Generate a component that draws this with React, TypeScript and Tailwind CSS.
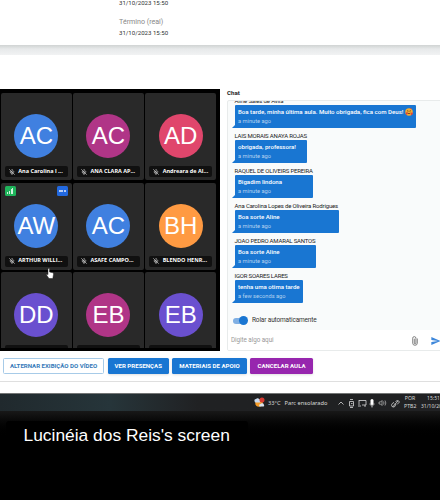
import React from 'react';
import { MicOff } from 'lucide-react';

const people = [
  { initials: 'AC', name: 'Ana Carolina l ...', color: 'bg-[#4080e0]' },
  { initials: 'AC', name: 'ANA CLARA AP...', color: 'bg-[#b03587]' },
  { initials: 'AD', name: 'Andreara de Al...', color: 'bg-[#e0466c]' },
  { initials: 'AW', name: 'ARTHUR WILLI...', color: 'bg-[#4080e0]', active: true },
  { initials: 'AC', name: 'ASAFE CAMPO...', color: 'bg-[#4080e0]' },
  { initials: 'BH', name: 'BLENDO HENR...', color: 'bg-[#ff9a42]' },
  { initials: 'DD', name: 'Diogo da Silva', color: 'bg-[#6a50cf]' },
  { initials: 'EB', name: 'EDER BARBOSA', color: 'bg-[#b03587]' },
  { initials: 'EB', name: 'Eliza Barros', color: 'bg-[#6a50cf]' },
];

const messages = [
  { name: 'Aline Sales de Avila', text: 'Boa tarde, minha última aula. Muito obrigada, fica com Deus!', ago: 'a minute ago', width: 'w-[181.500px]', nameGap: 'tracking-[-0.15px]', emoji: true },
  { name: 'LAIS MORAIS ANAYA ROJAS', text: 'obrigada, professora!', ago: 'a minute ago', width: 'w-[72.500px]', nameGap: 'tracking-[-0.19px]' },
  { name: 'RAQUEL DE OLIVEIRS PEREIRA', text: 'Bigadim lindona', ago: 'a minute ago', width: 'w-[78.500px]', nameGap: 'tracking-[-0.17px]' },
  { name: 'Ana Carolina Lopes de Oliveira Rodrigues', text: 'Boa sorte Aline', ago: 'a minute ago', width: 'w-[104px]', nameGap: 'tracking-[-0.15px]' },
  { name: 'JOAO PEDRO AMARAL SANTOS', text: 'Boa sorte Aline', ago: 'a minute ago', width: 'w-[81.500px]', nameGap: 'tracking-[-0.2px]' },
  { name: 'IGOR SOARES LARES', text: 'tenha uma otima tarde', ago: 'a few seconds ago', width: 'w-[68.500px]', nameGap: 'tracking-[-0.2px]' },
];

function Tile({ p }: { p: (typeof people)[number] }) {
  return (
    <div className="relative flex h-[87px] flex-col items-center rounded-[2px] bg-[#292929] pt-[21px]">
      {p.active && (
        <>
          <div className="absolute left-1 top-[3px] flex size-[10.5px] items-end justify-center gap-[0.6px] rounded-[1.5px] bg-[#1fb45b] pb-[2px]">
            <i className="h-[2px] w-[1px] bg-white/80" />
            <i className="h-[3.5px] w-[1px] bg-white/80" />
            <i className="h-[5px] w-[1px] bg-white/80" />
            <i className="h-[6.5px] w-[1px] bg-white/80" />
          </div>
          <div className="absolute right-1 top-[3px] flex size-[10.5px] items-center justify-center gap-[0.6px] rounded-[1.5px] bg-[#2269e0]">
            <i className="size-[2px] rounded-full bg-white/90" />
            <i className="size-[2px] rounded-full bg-white/90" />
            <i className="size-[2px] rounded-full bg-white/90" />
          </div>
          <svg className="absolute left-[45px] top-[85px] z-10 h-[11px] w-[8px]" viewBox="0 0 8 11">
            <path d="M2 .7q1-.9 1.500.3V4l3.300.8q.9.400.7 1.500L6.800 10.500H3L.4 6.800q.2-1.200 1.600-.2z" fill="#fff" stroke="#222" strokeWidth=".5" />
          </svg>
        </>
      )}
      <div className={`flex size-11 shrink-0 items-center justify-center rounded-full text-[24px] leading-none text-white ${p.color}`}>
        {p.initials}
      </div>
      <div className="mt-[8px] flex h-[11px] w-[63px] items-center rounded-[2px] bg-[#101010] pl-[4px] text-white">
        <MicOff className="size-[6px] shrink-0" strokeWidth={2} />
        <span className="ml-[3.5px] whitespace-nowrap font-['Open_Sans',sans-serif] text-[5.5px] font-bold leading-none">{p.name}</span>
      </div>
    </div>
  );
}

function Btn({ children, className }: { children: React.ReactNode; className: string }) {
  return (
    <button className={`flex h-4 items-center justify-center whitespace-nowrap rounded-[1.5px] text-[6.1px] font-bold leading-none ${className}`}>
      {children}
    </button>
  );
}

function Message({ m }: { m: (typeof messages)[number] }) {
  return (
    <div className="h-[35px]">
      <div className={`h-2 whitespace-nowrap text-[6px] leading-[9px] text-[#222] ${m.nameGap}`}>{m.name}</div>
      <div className={`relative mt-[1px] h-[23px] rounded-[1px] bg-[#1976d2] pl-[3.5px] pt-[3px] ${m.width}`}>
        <svg className="absolute -left-[3px] bottom-0 h-[4px] w-[4px]" viewBox="0 0 4 4"><path d="M4 0V4H0Z" fill="#1976d2" /></svg>
        <div className="flex h-2 items-center whitespace-nowrap text-[6.1px] font-medium leading-[8px] text-white">
          {m.text}
          {m.emoji && (
            <svg className="ml-[2px] size-[8px]" viewBox="0 0 16 16">
              <circle cx="8" cy="8" r="7.5" fill="#f5ad32" />
              <path d="M4 6.5q1.5-2 3 0M9 6.5q1.5-2 3 0M5 10q3 3 6 0" stroke="#5d3212" strokeWidth="1.5" fill="none" />
              <path d="M1 10l3-2 2 3-3 3zM11 12l3-4 2 3-3 4zM9 1l3-1 2 3z" fill="#e3443c" />
            </svg>
          )}
        </div>
        <div className="mt-[1px] whitespace-nowrap text-[5.7px] leading-[8px] text-[#b4d2f0]">{m.ago}</div>
      </div>
    </div>
  );
}

export default function App() {
  return (
    <div className="flex h-[500px] w-[440px] flex-col overflow-hidden bg-white font-[Roboto,sans-serif]">
      <div className="h-[45px] shrink-0 pl-[119px] text-[6.1px] leading-[8px] text-[#333]">
        <div className="-mt-[1px]">31/10/2023 15:50</div>
        <div className="mt-[11px] text-[7.1px] text-[#888]">Término (real)</div>
        <div className="mt-[3px]">31/10/2023 15:50</div>
      </div>
      <div className="h-[10px] shrink-0 bg-linear-to-b from-[#d0d3d3] via-[#e7e9ea] via-40% to-[#f1f2f3]" />
      <div className="flex h-[296px] shrink-0 pt-[34px]">
        <section className="h-[262px] w-[220px] overflow-hidden bg-black pl-[1px] pr-[4px] pt-1 font-['Liberation_Sans',sans-serif]">
          <div className="grid h-[255px] grid-cols-3 content-start gap-x-[1.5px] gap-y-[2.5px] overflow-hidden">
            {people.map((p, i) => <Tile key={i} p={p} />)}
          </div>
        </section>
        <section className="ml-[7px] w-[213px]">
          <h2 className="h-[11px] text-[6.2px] font-bold leading-[8px] text-[#222]">Chat</h2>
          <div className="h-[251px] w-[216px] overflow-hidden rounded-[2px] border border-[#e8ebeb] bg-[#f9fbfb]">
            <div className="h-[210px] overflow-hidden pl-[6.5px]">
              <div className="-mt-[5px]">
                {messages.map((m) => <Message key={m.name} m={m} />)}
              </div>
            </div>
            <div className="flex h-[19px] items-center pl-[5px] text-[6.5px] text-[#333]">
              <div className="flex h-[6px] w-[13px] items-center justify-end rounded-full bg-[#7fafe3]">
                <div className="-mr-[2px] size-[9px] shrink-0 rounded-full bg-[#1976d2]" />
              </div>
              <span className="ml-[6px] whitespace-nowrap pt-px tracking-[-0.15px]">Rolar automaticamente</span>
            </div>
            <div className="flex h-[21px] items-center bg-white pl-[3px] text-[6.3px] text-[#999]">
              <span className="w-[181px] whitespace-nowrap pt-px tracking-[-0.05px]">Digite algo aqui</span>
              <svg className="h-[10px] w-[6px]" viewBox="0 0 6 10" fill="none" stroke="#666" strokeWidth=".8">
                <path d="M5.3 2.5V7a2.3 2.3 0 0 1-4.6 0V2.2a1.6 1.6 0 0 1 3.2 0V7a.8.8 0 0 1-1.6 0V2.7" />
              </svg>
              <svg className="ml-[13px] h-[8px] w-[10px] shrink-0" viewBox="0 0 21 18" fill="#3e87da"><path d="M0 18 21 9 0 0v7l15 2-15 2z" /></svg>
            </div>
          </div>
        </section>
      </div>
      <div className="flex h-[31px] shrink-0 items-start border-b border-[#dfdfdf] pl-[3px] pt-[7px] text-white">
        <Btn className="w-[101px] border border-[#a7cbe8] text-[#3379b8]">ALTERNAR EXIBIÇÃO DO VÍDEO</Btn>
        <Btn className="ml-[3.5px] w-[61.500px] bg-[#1976d2] shadow-sm">VER PRESENÇAS</Btn>
        <Btn className="ml-[3px] w-[75px] bg-[#1976d2] shadow-sm">MATERIAIS DE APOIO</Btn>
        <Btn className="ml-[3px] w-[63px] bg-[#9726ae] shadow-sm">CANCELAR AULA</Btn>
      </div>
      <div className="mt-[11px] flex h-[18px] shrink-0 items-center border-t border-[#737575] bg-linear-to-r from-[#20292d] via-[#26353a] via-25% to-[#202123] to-45% pl-[254px] font-['Noto_Sans',sans-serif] text-[5.7px] leading-[8px] text-[#d8d8d8]">
        <svg className="size-[11px] shrink-0" viewBox="0 0 22 22">
          <circle cx="10" cy="12" r="7.5" fill="#f49b28" />
          <path d="M1 8a3 3 0 0 1 3-4 4 4 0 0 1 7 1 3 3 0 0 1 0 6H4a3 3 0 0 1-3-3z" fill="#c8d9ee" />
          <circle cx="16" cy="6" r="5" fill="#d63931" />
          <path d="M11 19a3 3 0 0 1 2-5 4 4 0 0 1 7 2 2 2 0 0 1-1 3z" fill="#d7e1ee" />
        </svg>
        <span className="ml-[3px] w-[16.5px] shrink-0 whitespace-nowrap">33°C</span>
        <span className="w-[53.5px] shrink-0 whitespace-nowrap">Parc ensolarado</span>
        <svg className="h-[12px] w-[62px] shrink-0" viewBox="0 0 62 12" fill="none" stroke="#d8d8d8" strokeWidth=".8">
          <path d="M.5 7.5 3 5l2.500 2.500" />
          <path d="M11.500 4.500h4v4.500h-4zM12 2.500h3M12 10.500h3M13 6.500h1.500" />
          <path d="M21 3.500h7v4.500h-4M21 3v5M20 9h3M27 8v2" />
          <rect x="32.500" y="2" width="3" height="6" rx="1.500" fill="#fff" stroke="none" /><path d="M32 6.500c0 3 4 3 4 0M34 9v1.500" />
          <path d="M41 5h1.500l1.500-1.500v5L42.500 7H41zM45.500 4.500q1 1.500 0 3M47 3.500q1.700 2.500 0 5" strokeWidth=".6" />
          <path d="m54.500 10 5.500-6M56 5.500c-3 1-3 4-1 4.500s3-2 2-3.500M57.500 5l2-2 2 2-2.500 2.500" />
        </svg>
        <div className="ml-[4px] w-[12px] shrink-0 text-center text-[5.2px] leading-[7.5px]">POR<br />PTB2</div>
        <div className="ml-[5px] w-[25px] shrink-0 whitespace-nowrap text-center text-[5px] leading-[7.5px]">15:51<br />31/10/2023</div>
      </div>
      <div className="flex-1 bg-black bg-linear-to-b from-[#181818] to-black to-[28px] pl-[6px] pt-[10px]">
        <div className="flex h-[29px] w-[242px] items-center whitespace-nowrap rounded-[3px] bg-black pl-[17.5px] font-['Liberation_Sans',sans-serif] text-[17.4px] leading-none text-white">
          Lucinéia dos Reis's screen
        </div>
      </div>
    </div>
  );
}
